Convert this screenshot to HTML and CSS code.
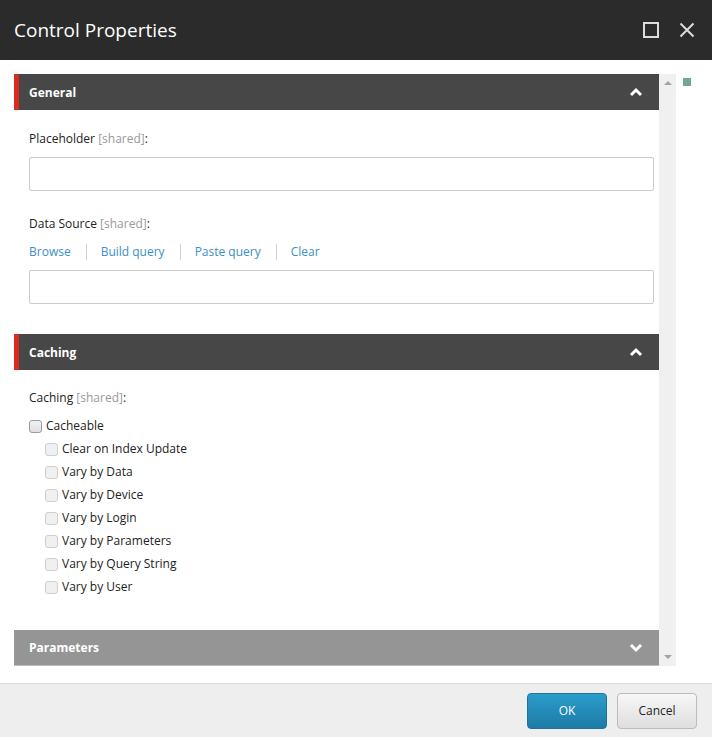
FILE: index.html
```html
<!DOCTYPE html>
<html>
<head>
<meta charset="utf-8">
<link rel="stylesheet" href="styles.css">
</head>
<body>
<div class="dialog">
  <header class="titlebar">
    <h1 class="title">Control Properties</h1>
    <div class="win-btns">
      <svg class="win-icon" width="16" height="16" viewBox="0 0 16 16"><rect x="1" y="1" width="14" height="14" fill="none" stroke="#dcdcdc" stroke-width="2"/></svg>
      <svg class="win-icon" width="16" height="16" viewBox="0 0 16 16"><path d="M1.5 1.5 L14.5 14.5 M14.5 1.5 L1.5 14.5" stroke="#dcdcdc" stroke-width="2" fill="none"/></svg>
    </div>
  </header>
  <main class="main">
    <div class="scroller">
      <div class="panel">
        <section class="section">
          <div class="sec-head active">
            <span class="sec-title">General</span>
            <svg class="chev" width="14" height="10" viewBox="0 0 14 10"><path d="M2 8 L7 3 L12 8" stroke="#fff" stroke-width="3" fill="none"/></svg>
          </div>
          <div class="sec-body general">
            <div class="label">Placeholder <span class="shared">[shared]</span>:</div>
            <div class="input"></div>
            <div class="label ds">Data Source <span class="shared">[shared]</span>:</div>
            <div class="links">
              <a class="link first">Browse</a>
              <a class="link">Build query</a>
              <a class="link">Paste query</a>
              <a class="link">Clear</a>
            </div>
            <div class="input"></div>
          </div>
        </section>
        <section class="section">
          <div class="sec-head active">
            <span class="sec-title">Caching</span>
            <svg class="chev" width="14" height="10" viewBox="0 0 14 10"><path d="M2 8 L7 3 L12 8" stroke="#fff" stroke-width="3" fill="none"/></svg>
          </div>
          <div class="sec-body caching">
            <div class="label">Caching <span class="shared">[shared]</span>:</div>
            <div class="checks">
              <label class="check main-check"><span class="box"></span>Cacheable</label>
              <label class="check sub"><span class="box dis"></span>Clear on Index Update</label>
              <label class="check sub"><span class="box dis"></span>Vary by Data</label>
              <label class="check sub"><span class="box dis"></span>Vary by Device</label>
              <label class="check sub"><span class="box dis"></span>Vary by Login</label>
              <label class="check sub"><span class="box dis"></span>Vary by Parameters</label>
              <label class="check sub"><span class="box dis"></span>Vary by Query String</label>
              <label class="check sub"><span class="box dis"></span>Vary by User</label>
            </div>
          </div>
        </section>
        <section class="section">
          <div class="sec-head collapsed">
            <span class="sec-title">Parameters</span>
            <svg class="chev" width="14" height="10" viewBox="0 0 14 10"><path d="M2 2 L7 7 L12 2" stroke="#fff" stroke-width="3" fill="none"/></svg>
          </div>
        </section>
      </div>
      <div class="scrollbar">
        <span class="arrow up"></span>
        <span class="arrow down"></span>
      </div>
    </div>
    <div class="marker"></div>
  </main>
  <footer class="footer">
    <button class="btn ok">OK</button>
    <button class="btn cancel">Cancel</button>
  </footer>
</div>
</body>
</html>
```

FILE: styles.css
```css
* { box-sizing: border-box; }
html, body { margin: 0; padding: 0; }
body {
  font-family: "Open Sans", "Noto Sans", sans-serif;
  font-size: 12px;
  color: #222;
  background: #fff;
}
.dialog {
  width: 712px;
  height: 737px;
  display: flex;
  flex-direction: column;
}
.titlebar {
  height: 60px;
  background: #2b2b2b;
  display: flex;
  align-items: center;
  justify-content: space-between;
  padding: 0 17px 0 14px;
}
.title {
  margin: 0;
  font-size: 19px;
  font-weight: 400;
  color: #fff;
  letter-spacing: 0;
}
.win-btns { display: flex; gap: 20px; align-items: center; }
.win-icon { display: block; }

.main {
  flex: 1;
  display: flex;
  align-items: flex-start;
  padding: 14px 0 0 14px;
}
.scroller {
  display: flex;
  width: 662px;
  height: 592px;
  overflow: hidden;
}
.panel {
  width: 645px;
  height: 592px;
  overflow: hidden;
}
.scrollbar {
  width: 17px;
  height: 592px;
  background: #f0f0f0;
  display: flex;
  flex-direction: column;
  justify-content: space-between;
  align-items: center;
  padding: 7px 0;
}
.arrow {
  width: 0; height: 0;
  border-left: 4px solid transparent;
  border-right: 4px solid transparent;
}
.arrow.up { border-bottom: 4px solid #a3a3a3; }
.arrow.down { border-top: 4px solid #a3a3a3; }
.marker {
  width: 8px;
  height: 8px;
  background: #6fa898;
  margin: 4px 0 0 7px;
}

.sec-head {
  height: 36px;
  display: flex;
  align-items: center;
  justify-content: space-between;
  padding: 0 16px 0 15px;
  color: #fff;
}
.sec-head.active {
  background: #474747;
  border-left: 5px solid #dc2a20;
  padding-left: 10px;
}
.sec-head.collapsed {
  background: #959595;
  border-bottom: 1px solid #bdbdbd;
}
.sec-title { font-weight: 700; font-size: 12px; }
.chev { display: block; }

.sec-body { padding: 0 5px 0 15px; }
.general { padding-top: 20px; padding-bottom: 30px; }
.caching { padding-top: 19px; padding-bottom: 34px; }
.label { line-height: 18px; height: 18px; }
.shared { color: #9a9a9a; }
.input {
  height: 34px;
  border: 1px solid #cccccc;
  border-radius: 2px;
  background: #fff;
  margin-top: 9px;
}
.label.ds { margin-top: 24px; }
.links {
  display: flex;
  align-items: center;
  margin-top: 9px;
  height: 18px;
  line-height: 18px;
  padding-top: 1px;
}
.links + .input { margin-top: 10px; }
.link {
  color: #3b8fc4;
  padding: 0 15px 0 14px;
  border-left: 1px solid #d0d0d0;
  line-height: 16px;
}
.link.first { padding-left: 0; border-left: 0; }

.checks {
  display: flex;
  flex-direction: column;
  gap: 5px;
  margin-top: 10px;
}
.check {
  display: flex;
  align-items: center;
  height: 18px;
  line-height: 18px;
  gap: 4px;
}
.check.sub { padding-left: 16px; }
.box {
  width: 13px;
  height: 13px;
  border: 1px solid #9c9c9c;
  border-radius: 3px;
  background: linear-gradient(#f4f4f4, #dedede);
}
.box.dis {
  border-color: #cfcfcf;
  background: #f0f0f0;
}

.footer {
  height: 54px;
  border-top: 1px solid #dcdcdc;
  background: #eeeeee;
  display: flex;
  justify-content: flex-end;
  align-items: center;
  gap: 10px;
  padding: 0 15px 0 0;
}
.btn {
  width: 80px;
  height: 36px;
  border-radius: 4px;
  font-family: "Open Sans", "Noto Sans", sans-serif;
  font-size: 12px;
  cursor: pointer;
}
.btn.ok {
  color: #fff;
  border: 1px solid #1b73a0;
  background: linear-gradient(#2b9ccb, #1e7aa6);
}
.btn.cancel {
  color: #222;
  border: 1px solid #bcbcbc;
  background: linear-gradient(#f7f7f7, #dedede);
}
```
